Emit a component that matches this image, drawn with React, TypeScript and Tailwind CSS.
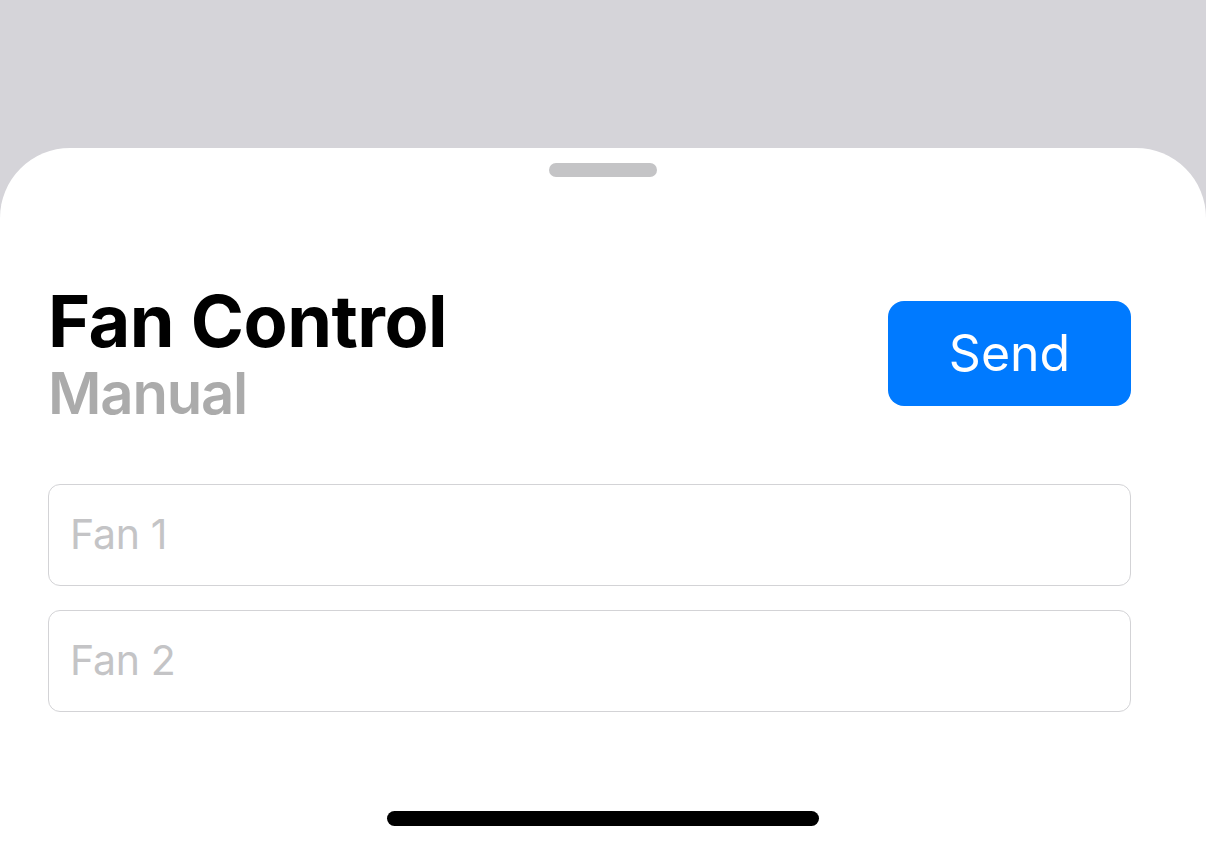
export default function App() {
  return (
    <div
      className="w-[1206px] h-[850px] bg-[#d5d4d9] flex flex-col overflow-hidden"
      style={{ fontFamily: "Inter, 'Noto Sans', sans-serif" }}
    >
      <div className="h-[148px] shrink-0" />
      <div className="flex-1 bg-white rounded-t-[70px] flex flex-col">
        <div className="flex justify-center pt-[15px]">
          <div className="w-[108px] h-[14px] rounded-full bg-[#c4c4c6]" />
        </div>
        <div className="flex items-start justify-between pl-[48px] pr-[75px] pt-[107px]">
          <div className="flex flex-col">
            <div className="text-[72px] font-bold leading-[74px] tracking-[-0.5px] text-black">
              Fan Control
            </div>
            <div className="text-[58px] font-semibold leading-[60px] tracking-[-1.2px] text-[#ababab] mt-[5px]">
              Manual
            </div>
          </div>
          <button className="w-[243px] h-[105px] rounded-[16px] bg-[#007aff] text-white text-[50px] font-normal mt-[17px]">
            Send
          </button>
        </div>
        <div className="flex flex-col gap-[24px] pl-[48px] pr-[75px] mt-[61px]">
          <div className="h-[102px] rounded-[12px] border border-[#d3d3d6] flex items-center pl-[21px] text-[41px] tracking-[-0.3px] text-[#c4c4c6]">
            Fan 1
          </div>
          <div className="h-[102px] rounded-[12px] border border-[#d3d3d6] flex items-center pl-[21px] text-[41px] tracking-[-0.3px] text-[#c4c4c6]">
            Fan 2
          </div>
        </div>
        <div className="flex-1" />
        <div className="flex justify-center pb-[24px]">
          <div className="w-[432px] h-[15px] rounded-full bg-black" />
        </div>
      </div>
    </div>
  );
}
